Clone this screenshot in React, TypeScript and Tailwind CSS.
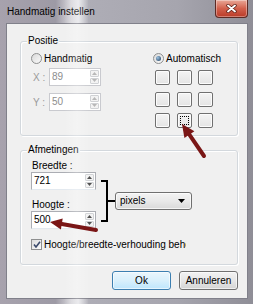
import React from "react";
import clsx from "clsx";

function Radio({ checked }: { checked?: boolean }) {
  return (
    <span className="flex h-[11px] w-[11px] shrink-0 items-center justify-center rounded-full border border-[#8e8f8f] bg-gradient-to-br from-[#d9d9d9] to-[#fafafa]">
      {checked && (
        <span className="h-[5px] w-[5px] rounded-full bg-[radial-gradient(circle_at_35%_35%,#9cc3e2,#1d3a5a)]" />
      )}
    </span>
  );
}

function SpinBtn({ up, disabled }: { up?: boolean; disabled?: boolean }) {
  return (
    <span className="flex flex-1 items-center justify-center rounded-[1px] border border-[#d0d2d5] bg-[#f3f3f3]">
      <svg width="5" height="3" viewBox="0 0 5 3">
        <path
          d={up ? "M0 3L2.5 0L5 3Z" : "M0 0L2.5 3L5 0Z"}
          fill={disabled ? "#b8b8b8" : "#4e4e4e"}
        />
      </svg>
    </span>
  );
}

interface BoxProps {
  value: string;
  disabled?: boolean;
  className?: string;
}
function NumBox({ value, disabled, className }: BoxProps) {
  return (
    <div
      className={clsx(
        "flex h-[18px] border bg-white",
        disabled
          ? "border-[#c9cacf] text-[#8d8d8d]"
          : "border-[#abadb3] border-b-[#e3e9ef] text-black",
        className
      )}
    >
      <span className="flex-1 pl-[2px] leading-[16px]">{value}</span>
      <span className="flex w-[10px] flex-col gap-px py-px pr-px">
        <SpinBtn up disabled={disabled} />
        <SpinBtn disabled={disabled} />
      </span>
    </div>
  );
}

function Cell({ focus }: { focus?: boolean }) {
  return (
    <span className="flex h-[15px] w-[15px] items-center justify-center rounded-[2px] border border-[#707070] bg-gradient-to-b from-[#f4f4f4] to-[#e4e4e4] shadow-[inset_0_0_0_1px_#fcfcfc]">
      {focus && <span className="h-[9px] w-[9px] border border-dotted border-black" />}
    </span>
  );
}

function Group({ title, className, children }: { title: string; className?: string; children: React.ReactNode }) {
  return (
    <div
      className={clsx(
        "relative rounded-[3px] border border-[#d3d8dd] shadow-[inset_1px_1px_0_#fff,1px_1px_0_#fff]",
        className
      )}
    >
      <span className="absolute left-[6px] top-[-7px] bg-[#f0f0f0] px-px leading-[12px] text-black">
        {title}
      </span>
      {children}
    </div>
  );
}

export default function App() {
  return (
    <div className="relative flex h-[304px] w-[253px] flex-col overflow-hidden bg-[linear-gradient(90deg,#a7a2ad_0%,#9d9aa5_22%,#d6d5da_28%,#e4e4e8_31%,#aeadb6_35%,#a6a5ae_70%,#8f8e97_100%)] font-['Liberation_Sans',Arial,sans-serif] text-[10px]">
      {/* title bar */}
      <div className="flex h-[23px] shrink-0">
        <span className="self-center pl-[7px] text-[10px] leading-[12px] text-black">Handmatig instellen</span>
        <div className="ml-auto mr-[5px] flex h-[18px] w-[33px] items-center justify-center rounded-b-[4px] border border-t-0 border-[#5c2a24] bg-gradient-to-b from-[#e8a797] via-[#d2604c] to-[#b93a27] shadow-[inset_0_0_0_1px_rgba(255,255,255,0.35)]">
          <svg width="11" height="9" viewBox="0 0 11 9">
            <path d="M2 1.5L9 7.5M9 1.5L2 7.5" stroke="#5a1d14" strokeWidth="3.4" strokeLinecap="round" />
            <path d="M2 1.5L9 7.5M9 1.5L2 7.5" stroke="#fff" strokeWidth="1.9" strokeLinecap="round" />
          </svg>
        </div>
      </div>

      {/* client area */}
      <div className="mb-[5px] ml-[6px] mr-[5px] flex flex-1 flex-col border border-[#80808a] bg-[#f0f0f0] pl-[13px] pr-[9px] pt-[17px]">
        <Group title="Positie" className="flex h-[95px]">
          <div className="flex w-[132px] flex-col pl-[10px]">
            <div className="mt-[9px] flex h-[14px] items-center gap-[2px]">
              <Radio />
              <span className="text-black">Handmatig</span>
            </div>
            <div className="mt-[3px] flex h-[18px] items-center">
              <span className="w-[18px] pl-[2px] text-[#9a9a9a]">X :</span>
              <NumBox value="89" disabled className="w-[52px]" />
            </div>
            <div className="mt-[7px] flex h-[18px] items-center">
              <span className="w-[18px] pl-[2px] text-[#9a9a9a]">Y :</span>
              <NumBox value="50" disabled className="w-[52px]" />
            </div>
          </div>
          <div className="flex flex-col">
            <div className="mt-[9px] flex h-[14px] items-center gap-[2px]">
              <Radio checked />
              <span className="text-black">Automatisch</span>
            </div>
            <div className="ml-[2px] mt-[5px] grid grid-cols-[repeat(3,15px)] gap-x-[6.5px] gap-y-[6.5px]">
              <Cell />
              <Cell />
              <Cell />
              <Cell />
              <Cell />
              <Cell />
              <Cell />
              <Cell focus />
              <Cell />
            </div>
          </div>
        </Group>

        <Group title="Afmetingen" className="mt-[14px] flex h-[115px] flex-col pl-[10px]">
          <div className="mt-[8px] flex items-start">
            <div className="flex w-[65px] flex-col">
              <span className="h-[13px] pl-px leading-[13px] text-black">Breedte :</span>
              <NumBox value="721" className="w-[65px]" />
              <span className="mt-[8px] h-[13px] pl-px leading-[13px] text-black">Hoogte :</span>
              <NumBox value="500" className="w-[65px]" />
            </div>
            <div className="ml-[5px] mt-[21px] flex items-center">
              <span className="h-[42px] w-[7px] border-y-2 border-r-2 border-black" />
              <span className="h-[2px] w-[7px] bg-black" />
              <div className="flex h-[18px] w-[77px] items-center justify-between rounded-[3px] border border-[#707070] bg-gradient-to-b from-[#f3f3f3] via-[#e9e9e9] to-[#d9d9d9] pl-[4px] pr-[6px] shadow-[inset_0_0_0_1px_rgba(255,255,255,0.7)]">
                <span className="leading-[12px] text-black">pixels</span>
                <svg width="7" height="4" viewBox="0 0 7 4">
                  <path d="M0 0H7L3.5 4Z" fill="#000" />
                </svg>
              </div>
            </div>
          </div>
          <div className="mt-[8px] flex h-[14px] items-center gap-[2px]">
            <span className="flex h-[11px] w-[11px] shrink-0 items-center justify-center border border-[#8e8f8f] bg-gradient-to-br from-[#dcdcdc] to-[#fbfbfb]">
              <svg width="8" height="7" viewBox="0 0 8 7">
                <path d="M1 3.5L3 6L7 0.8" stroke="#3b4a6b" strokeWidth="1.6" fill="none" />
              </svg>
            </span>
            <span className="w-[142px] overflow-hidden whitespace-nowrap text-black">
              Hoogte/breedte-verhouding behouden
            </span>
          </div>
        </Group>

        <div className="mt-[6px] flex justify-end gap-[8px]">
          <button className="flex h-[19px] w-[59px] items-center justify-center rounded-[3px] border border-[#3c7fb1] bg-gradient-to-b from-[#eaf6fd] via-[#d9f0fc] to-[#bee6fd] text-black shadow-[inset_0_0_0_1px_rgba(255,255,255,0.6)]">
            Ok
          </button>
          <button className="flex h-[19px] w-[59px] items-center justify-center rounded-[3px] border border-[#707070] bg-gradient-to-b from-[#f2f2f2] via-[#e6e6e6] to-[#d4d4d4] text-black shadow-[inset_0_0_0_1px_rgba(255,255,255,0.6)]">
            Annuleren
          </button>
        </div>
      </div>

      {/* glass reflection band */}
      <div className="pointer-events-none absolute inset-y-0 left-[64px] w-[26px] bg-gradient-to-r from-transparent via-white/25 to-transparent" />

      {/* red annotation arrows */}
      <svg className="pointer-events-none absolute left-0 top-0" width="253" height="304" viewBox="0 0 253 304">
        <path d="M204 156L189.4 134.7" stroke="#7a1616" strokeWidth="4" strokeLinecap="round" />
        <polygon points="182,124 194.4,131.3 184.4,138.1" fill="#7a1616" />
        <path d="M96 230L61.8 224" stroke="#7a1616" strokeWidth="4" strokeLinecap="round" />
        <polygon points="50,222 62.7,218.6 60.9,229.5" fill="#7a1616" />
      </svg>
    </div>
  );
}
